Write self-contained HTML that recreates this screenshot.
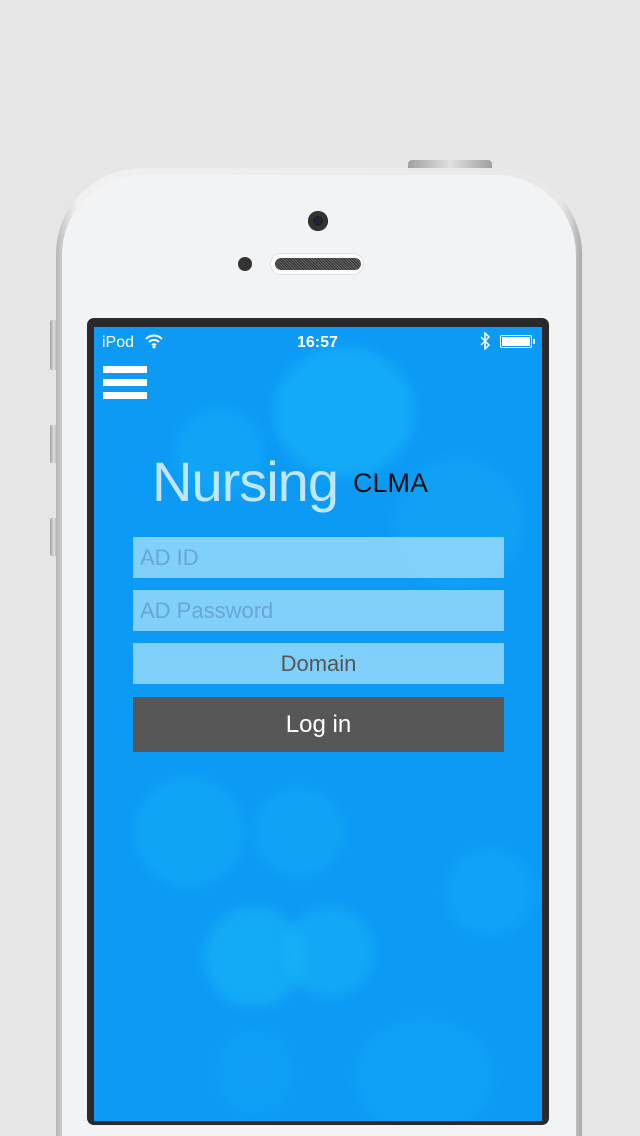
<!DOCTYPE html>
<html style="width:640px;height:1136px;overflow:hidden"><head><meta charset="utf-8"><style>
*{margin:0;padding:0;box-sizing:border-box}
body{width:640px;height:1136px;background:#e6e6e6;position:relative;overflow:hidden;font-family:"Liberation Sans",sans-serif}
.abs{position:absolute}
.phone{left:56px;top:168px;width:526px;height:1000px;border-radius:86px 86px 0 0;background:linear-gradient(90deg,#b8b8b8,#d8d8d8 2%,#f0f0f0 4%,#e8e8e8 96%,#d0d0d0 98%,#a8a8a8);}
.inner{left:62px;top:175px;width:514px;height:1000px;border-radius:80px 80px 0 0;background:#f2f3f5;}
.btn{background:linear-gradient(90deg,#a0a0a0,#e0e0e0,#a0a0a0);border-radius:2px}
.bezel{left:87px;top:318px;width:462px;height:807px;background:#2a2a2c;border-radius:7px}
.screen{left:94px;top:327px;width:448px;height:794px;overflow:hidden;background:#0c9af5}
.b{position:absolute;border-radius:50%;filter:blur(6px)}
.st{color:#fff;font-size:16px;top:334px}
.field{left:133px;width:371px;height:41px;background:rgba(175,228,255,.72);font-size:22px;color:#6aa6d2;padding-left:7px;line-height:41px}
</style></head><body>
<div class="abs btn" style="left:408px;top:160px;width:84px;height:10px;border-radius:4px 4px 0 0"></div>
<div class="abs btn" style="left:50px;top:320px;width:8px;height:50px"></div>
<div class="abs btn" style="left:50px;top:425px;width:8px;height:38px"></div>
<div class="abs btn" style="left:50px;top:518px;width:8px;height:38px"></div>
<div class="abs phone"></div>
<div class="abs inner"></div>
<div class="abs" style="left:308px;top:211px;width:20px;height:20px;border-radius:50%;background:#222;box-shadow:inset 0 0 0 5px #333"><div style="margin:7px;width:6px;height:6px;border-radius:50%;background:#224"></div></div>
<div class="abs" style="left:238px;top:257px;width:14px;height:14px;border-radius:50%;background:#333"></div>
<div class="abs" style="left:270px;top:253px;width:94px;height:22px;border-radius:11px;background:#fff;border:1px solid #e0e0e0"></div>
<div class="abs" style="left:275px;top:258px;width:86px;height:12px;border-radius:6px;background:repeating-linear-gradient(45deg,#333 0 1px,#666 1px 2px)"></div>
<div class="abs bezel"></div>
<div class="abs screen">
<div class="b" style="left:180px;top:20px;width:140px;height:130px;background:#1bbcfa;opacity:.5"></div>
<div class="b" style="left:80px;top:80px;width:90px;height:90px;background:#13aaf7;opacity:.6"></div>
<div class="b" style="left:300px;top:130px;width:130px;height:130px;background:#15a8f6;opacity:.5"></div>
<div class="b" style="left:40px;top:450px;width:110px;height:110px;background:#14acf6;opacity:.6"></div>
<div class="b" style="left:160px;top:460px;width:90px;height:90px;background:#14acf6;opacity:.5"></div>
<div class="b" style="left:110px;top:580px;width:100px;height:100px;background:#18b6f8;opacity:.6"></div>
<div class="b" style="left:190px;top:580px;width:90px;height:90px;background:#18b6f8;opacity:.5"></div>
<div class="b" style="left:350px;top:520px;width:90px;height:90px;background:#13aaf7;opacity:.5"></div>
<div class="b" style="left:260px;top:690px;width:140px;height:120px;background:#12a8f6;opacity:.5"></div>
<div class="b" style="left:120px;top:700px;width:80px;height:90px;background:#11a4f6;opacity:.5"></div>
</div>
<div class="abs st" style="left:102px">iPod</div>
<svg class="abs" style="left:144px;top:333px" width="20" height="16" viewBox="0 0 20 16"><path d="M2 6a11 11 0 0 1 16 0M5 9a7 7 0 0 1 10 0M8 12a3 3 0 0 1 4 0" stroke="#fff" stroke-width="2" fill="none"/><circle cx="10" cy="14" r="1.5" fill="#fff"/></svg>
<div class="abs st" style="left:297px;font-weight:bold">16:57</div>
<svg class="abs" style="left:479px;top:332px" width="12" height="18" viewBox="0 0 12 18"><path d="M2 5l8 8-4 4V1l4 4-8 8" stroke="#fff" stroke-width="1.5" fill="none"/></svg>
<div class="abs" style="left:500px;top:335px;width:32px;height:13px;border:1px solid #fff;border-radius:2px;padding:1px"><div style="background:#fff;width:100%;height:100%"></div></div>
<div class="abs" style="left:533px;top:339px;width:2px;height:5px;background:#fff"></div>
<div class="abs" style="left:103px;top:366px;width:44px;height:7px;background:#fff"></div>
<div class="abs" style="left:103px;top:379px;width:44px;height:7px;background:#fff"></div>
<div class="abs" style="left:103px;top:392px;width:44px;height:7px;background:#fff"></div>
<div class="abs" style="left:152px;top:449px;font-size:56px;color:#bfe6ff;letter-spacing:-1px">Nursing</div>
<div class="abs" style="left:353px;top:468px;font-size:27px;color:#111">CLMA</div>
<div class="abs field" style="top:537px">AD ID</div>
<div class="abs field" style="top:590px">AD Password</div>
<div class="abs field" style="top:643px;text-align:center;padding:0;color:#555">Domain</div>
<div class="abs" style="left:133px;top:697px;width:371px;height:55px;background:#575757;color:#fff;font-size:24px;text-align:center;line-height:55px">Log in</div>
</body></html>
